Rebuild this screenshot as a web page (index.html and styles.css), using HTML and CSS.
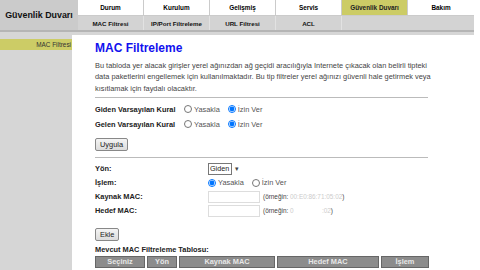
FILE: index.html
```html
<!DOCTYPE html>
<html lang="tr">
<head>
    <meta charset="UTF-8">
    <meta name="viewport" content="width=device-width, initial-scale=1.0">
    <title>MAC Filtreleme</title>
    <link rel="stylesheet" href="styles.css">
</head>
<body>
    <div class="top">
        <div class="brand">Güvenlik Duvarı</div>
        <div class="menus">
            <ul class="tabs">
                <li>Durum</li>
                <li>Kurulum</li>
                <li>Gelişmiş</li>
                <li>Servis</li>
                <li class="active">Güvenlik Duvarı</li>
                <li>Bakım</li>
            </ul>
            <ul class="subtabs">
                <li>MAC Filtresi</li>
                <li>IP/Port Filtreleme</li>
                <li>URL Filtresi</li>
                <li>ACL</li>
                <li class="blank"></li>
            </ul>
        </div>
    </div>
    <div class="topbar"></div>

    <div class="page">
        <div class="side">
            <div class="side-item active">MAC Filtresi</div>
        </div>

        <div class="content">
            <h1>MAC Filtreleme</h1>
            <p class="intro">Bu tabloda yer alacak girişler yerel ağınızdan ağ geçidi aracılığıyla Internete çıkacak olan belirli tipteki data paketlerini engellemek için kullanılmaktadır. Bu tip filtreler yerel ağınızı güvenli hale getirmek veya kısıtlamak için faydalı olacaktır.</p>
            <hr class="sep-top">

            <div class="rules">
                <div class="rule">
                    <span class="rule-label">Giden Varsayılan Kural</span>
                    <label><input type="radio" name="out"> Yasakla</label>
                    <label><input type="radio" name="out" checked> İzin Ver</label>
                </div>
                <div class="rule">
                    <span class="rule-label">Gelen Varsayılan Kural</span>
                    <label><input type="radio" name="in"> Yasakla</label>
                    <label><input type="radio" name="in" checked> İzin Ver</label>
                </div>
            </div>
            <button class="btn apply">Uygula</button>
            <hr class="sep-mid">

            <div class="fields">
                <div class="field">
                    <span class="field-label">Yön:</span>
                    <div class="dropdown">
                        <select class="dir"><option>Giden</option><option>Gelen</option></select>
                        <span class="caret">▾</span>
                    </div>
                </div>
                <div class="field">
                    <span class="field-label">İşlem:</span>
                    <label><input type="radio" name="act" checked> Yasakla</label>
                    <label><input type="radio" name="act"> İzin Ver</label>
                </div>
                <div class="field">
                    <span class="field-label">Kaynak MAC:</span>
                    <input type="text" class="mac">
                    <span class="hint">(örneğin: <span class="faint">00:E0:86:71:05:02</span>)</span>
                </div>
                <div class="field">
                    <span class="field-label">Hedef MAC:</span>
                    <input type="text" class="mac">
                    <span class="hint">(örneğin: <span class="faint">0&nbsp;&nbsp;&nbsp;&nbsp;&nbsp;&nbsp;&nbsp;&nbsp;&nbsp;&nbsp;&nbsp;&nbsp;&nbsp;&nbsp;&nbsp;&nbsp;:02</span>)</span>
                </div>
            </div>
            <button class="btn add">Ekle</button>

            <div class="table-title">Mevcut MAC Filtreleme Tablosu:</div>
            <table class="list">
                <tr>
                    <th class="c-sel">Seçiniz</th>
                    <th class="c-dir">Yön</th>
                    <th class="c-src">Kaynak MAC</th>
                    <th class="c-dst">Hedef MAC</th>
                    <th class="c-act">İşlem</th>
                </tr>
            </table>
        </div>
    </div>
</body>
</html>
```

FILE: styles.css
```css
body {
    margin: 0;
    font-family: "Liberation Sans", Arial, sans-serif;
    font-size: 7.4px;
    color: #333;
    background-color: #fff;
}
ul {
    list-style: none;
    margin: 0;
    padding: 0;
}
.top {
    display: flex;
    width: 474px;
    height: 30px;
    background-color: #cbcbcb;
}
.brand {
    width: 78px;
    display: flex;
    align-items: center;
    justify-content: center;
    white-space: nowrap;
    font-size: 8.9px;
    font-weight: bold;
    color: #111;
}
.menus {
    flex: 1;
    display: flex;
    flex-direction: column;
}
.tabs, .subtabs {
    display: flex;
}
.tabs li {
    width: 65px;
    height: 15px;
    margin: 0 1px 1px 0;
    background-color: #fff;
    display: flex;
    align-items: center;
    justify-content: center;
    font-size: 6.4px;
    font-weight: bold;
    color: #000;
}
.tabs li:last-child {
    margin-right: 0;
    flex: 1;
}
.tabs li.active {
    background-color: #cccc66;
    color: #222;
}
.subtabs {
    height: 14px;
    background-color: #d3d3d3;
}
.subtabs li {
    width: 65px;
    border-right: 1px solid #e2e2e2;
    display: flex;
    align-items: center;
    justify-content: center;
    font-size: 6.2px;
    font-weight: bold;
    color: #111;
}
.subtabs li.blank {
    flex: 1;
    border-right: none;
}
.topbar {
    width: 474px;
    height: 5px;
    background: linear-gradient(#b5b5b5 0, #b5b5b5 2px, #d6d6d6 2px);
}
.page {
    display: flex;
    min-height: calc(100vh - 35px);
}
.side {
    width: 72px;
    background-color: #d6d6d6;
    padding-top: 6px;
    margin-top: -2px;
}
.side-item {
    height: 11px;
    line-height: 11px;
    text-align: right;
    padding-right: 1px;
    font-size: 6.4px;
    color: #333;
}
.side-item.active {
    background-color: #cccc66;
}
.content {
    flex: 1;
    padding: 6px 0 0 23px;
}
h1 {
    margin: 0;
    font-size: 12px;
    line-height: 14px;
    color: #1111ee;
}
.intro {
    width: 336px;
    margin: 5px 0 0;
    line-height: 11.3px;
    color: #444;
}
hr {
    width: 333px;
    margin: 0;
    border: none;
    border-top: 1px solid #bbb;
}
.sep-top {
    margin-top: 3px;
}
.sep-mid {
    margin-top: 6px;
}
.rules {
    margin-top: 4px;
}
.rule {
    display: flex;
    align-items: center;
    height: 15px;
}
.rule-label, .field-label, .table-title {
    font-weight: bold;
    color: #222;
}
.rule-label {
    width: 89px;
}
label {
    display: flex;
    align-items: center;
    margin-right: 8px;
    color: #555;
}
input[type="radio"] {
    width: 8px;
    height: 8px;
    margin: 0 2px 0 0;
}
.btn {
    display: block;
    height: 13px;
    padding: 0 4px;
    font-family: "Liberation Sans", Arial, sans-serif;
    font-size: 7.4px;
    color: #222;
    background: linear-gradient(#f4f4f4, #dcdcdc);
    border: 1px solid #888;
    border-radius: 2px;
}
.btn.apply {
    margin-top: 6px;
}
.btn.add {
    margin-top: 10px;
}
.fields {
    margin-top: 4px;
}
.field {
    display: flex;
    align-items: center;
    height: 14px;
}
.field-label {
    width: 113px;
}
.dropdown {
    display: flex;
    align-items: center;
}
.dir {
    appearance: none;
    height: 12px;
    width: 24px;
    padding: 0 1px;
    font-family: "Liberation Sans", Arial, sans-serif;
    font-size: 7.2px;
    color: #222;
    border: 1px solid #777;
    border-radius: 0;
    background-color: #fff;
}
.caret {
    width: 9px;
    height: 12px;
    line-height: 12px;
    text-align: center;
    font-size: 7px;
    color: #444;
}
.mac {
    width: 50px;
    height: 10px;
    padding: 0;
    margin: 0 3px 0 0;
    border: 1px solid #ddd;
}
.hint {
    font-size: 6.4px;
    color: #444;
}
.faint {
    color: #ccc;
}
.table-title {
    margin-top: 4px;
    line-height: 9px;
}
.list {
    margin: 2px 0 0 -2px;
    border-collapse: separate;
    border-spacing: 2px 0;
}
.list th {
    height: 10px;
    padding: 0;
    background-color: #8c8c8c;
    border: 1px solid #666;
    color: #e8e8e8;
    font-size: 7.4px;
    font-weight: bold;
}
.c-sel { width: 48px; }
.c-dir { width: 28px; }
.c-src { width: 94px; }
.c-dst { width: 100px; }
.c-act { width: 46px; }
```
